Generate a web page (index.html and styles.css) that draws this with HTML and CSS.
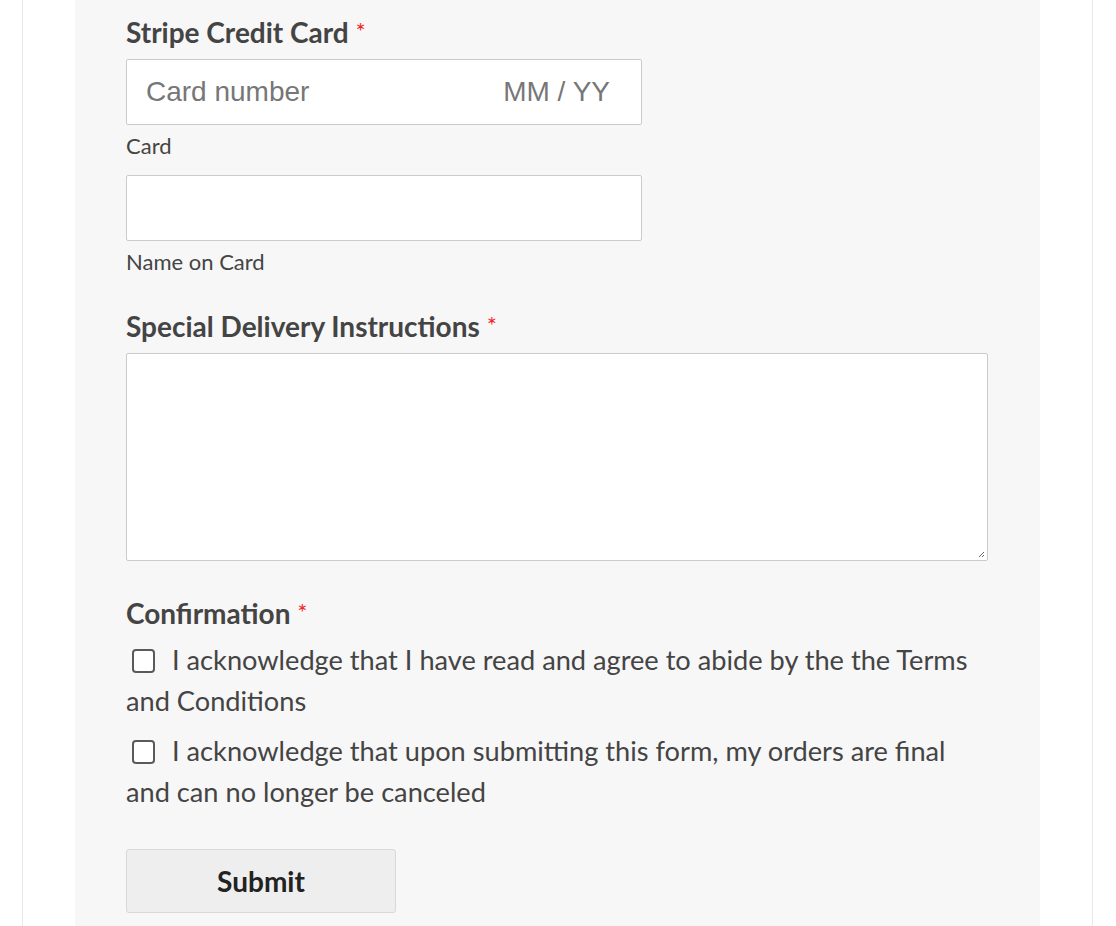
FILE: index.html
```html
<!DOCTYPE html>
<html lang="en">
<head>
<meta charset="utf-8">
<title>Order Form</title>
<link rel="stylesheet" href="styles.css">
</head>
<body>
<div class="page">
  <div class="panel">
    <form class="form">
      <div class="field field-first">
        <div class="label">Stripe Credit Card <span class="req">*</span></div>
        <div class="input card-input">
          <span class="ph">Card number</span>
          <span class="ph">MM / YY</span>
        </div>
        <div class="sublabel">Card</div>
        <div class="input name-input"></div>
        <div class="sublabel">Name on Card</div>
      </div>

      <div class="field field-delivery">
        <div class="label">Special Delivery Instructions <span class="req">*</span></div>
        <div class="textarea">
          <svg class="grip" width="8" height="8" viewBox="0 0 8 8"><path d="M7 2 L2 7 M7 5 L5 7" stroke="#666" stroke-width="1" fill="none"/></svg>
        </div>
      </div>

      <div class="field field-confirm">
        <div class="label">Confirmation <span class="req">*</span></div>
        <label class="check"><span class="box"></span>I acknowledge that I have read and agree to abide by the the Terms and Conditions</label>
        <label class="check check-second"><span class="box"></span>I acknowledge that upon submitting this form, my orders are final and can no longer be canceled</label>
      </div>

      <div class="actions">
        <button type="button" class="submit">Submit</button>
      </div>
    </form>
  </div>
</div>
</body>
</html>
```
FILE: styles.css
```css
* { box-sizing: border-box; }
html, body { margin: 0; padding: 0; background: #fff; }
body { font-family: Lato, "Open Sans", sans-serif; color: #444; }

.page {
  margin-left: 22px;
  width: 1071px;
  min-height: 926px;
  border-left: 1px solid #e8e8e8;
  border-right: 1px solid #e8e8e8;
}

.panel {
  margin-left: 52px;
  width: 965px;
  min-height: 926px;
  background: #f7f7f7;
  padding: 14px 51px 0 51px;
}

.label {
  font-size: 28px;
  line-height: 34px;
  font-weight: 700;
  color: #444;
}
.req {
  color: #f0262a;
  font-weight: 400;
  font-size: 24px;
  vertical-align: 3px;
}

.input {
  width: 516px;
  height: 66px;
  background: #fff;
  border: 1px solid #cbcbcb;
  border-radius: 2px;
}
.field-first .label { margin-bottom: 10px; }

.card-input {
  display: flex;
  align-items: center;
  justify-content: space-between;
  padding: 0 31px 0 19px;
}
.ph {
  font-family: "Liberation Sans", Arial, sans-serif;
  font-size: 28px;
  color: #777;
}

.sublabel {
  font-size: 22px;
  line-height: 26px;
  margin-top: 8px;
  color: #444;
}
.name-input { margin-top: 16px; }

.field-delivery { margin-top: 33px; }
.field-delivery .label { margin-bottom: 10px; }
.textarea {
  position: relative;
  width: 862px;
  height: 208px;
  background: #fff;
  border: 1px solid #cbcbcb;
  border-radius: 2px;
}
.grip { position: absolute; right: 2px; bottom: 2px; }

.field-confirm { margin-top: 34px; }
.field-confirm .label { margin-bottom: 9px; }
.check {
  display: block;
  width: 862px;
  font-size: 27.2px;
  line-height: 41px;
  color: #444;
}
.check-second { margin-top: 9px; }
.box {
  display: inline-block;
  width: 23px;
  height: 24px;
  margin: 0 17px 0 6px;
  border: 2px solid #5a5a5a;
  border-radius: 4px;
  background: #fff;
  vertical-align: -3px;
}

.actions { margin-top: 37px; }
.submit {
  width: 270px;
  height: 64px;
  background: #eee;
  border: 1px solid #d8d8d8;
  border-radius: 3px;
  font-family: Lato, sans-serif;
  font-weight: 700;
  font-size: 28px;
  color: #222;
  padding: 0;
}
```
